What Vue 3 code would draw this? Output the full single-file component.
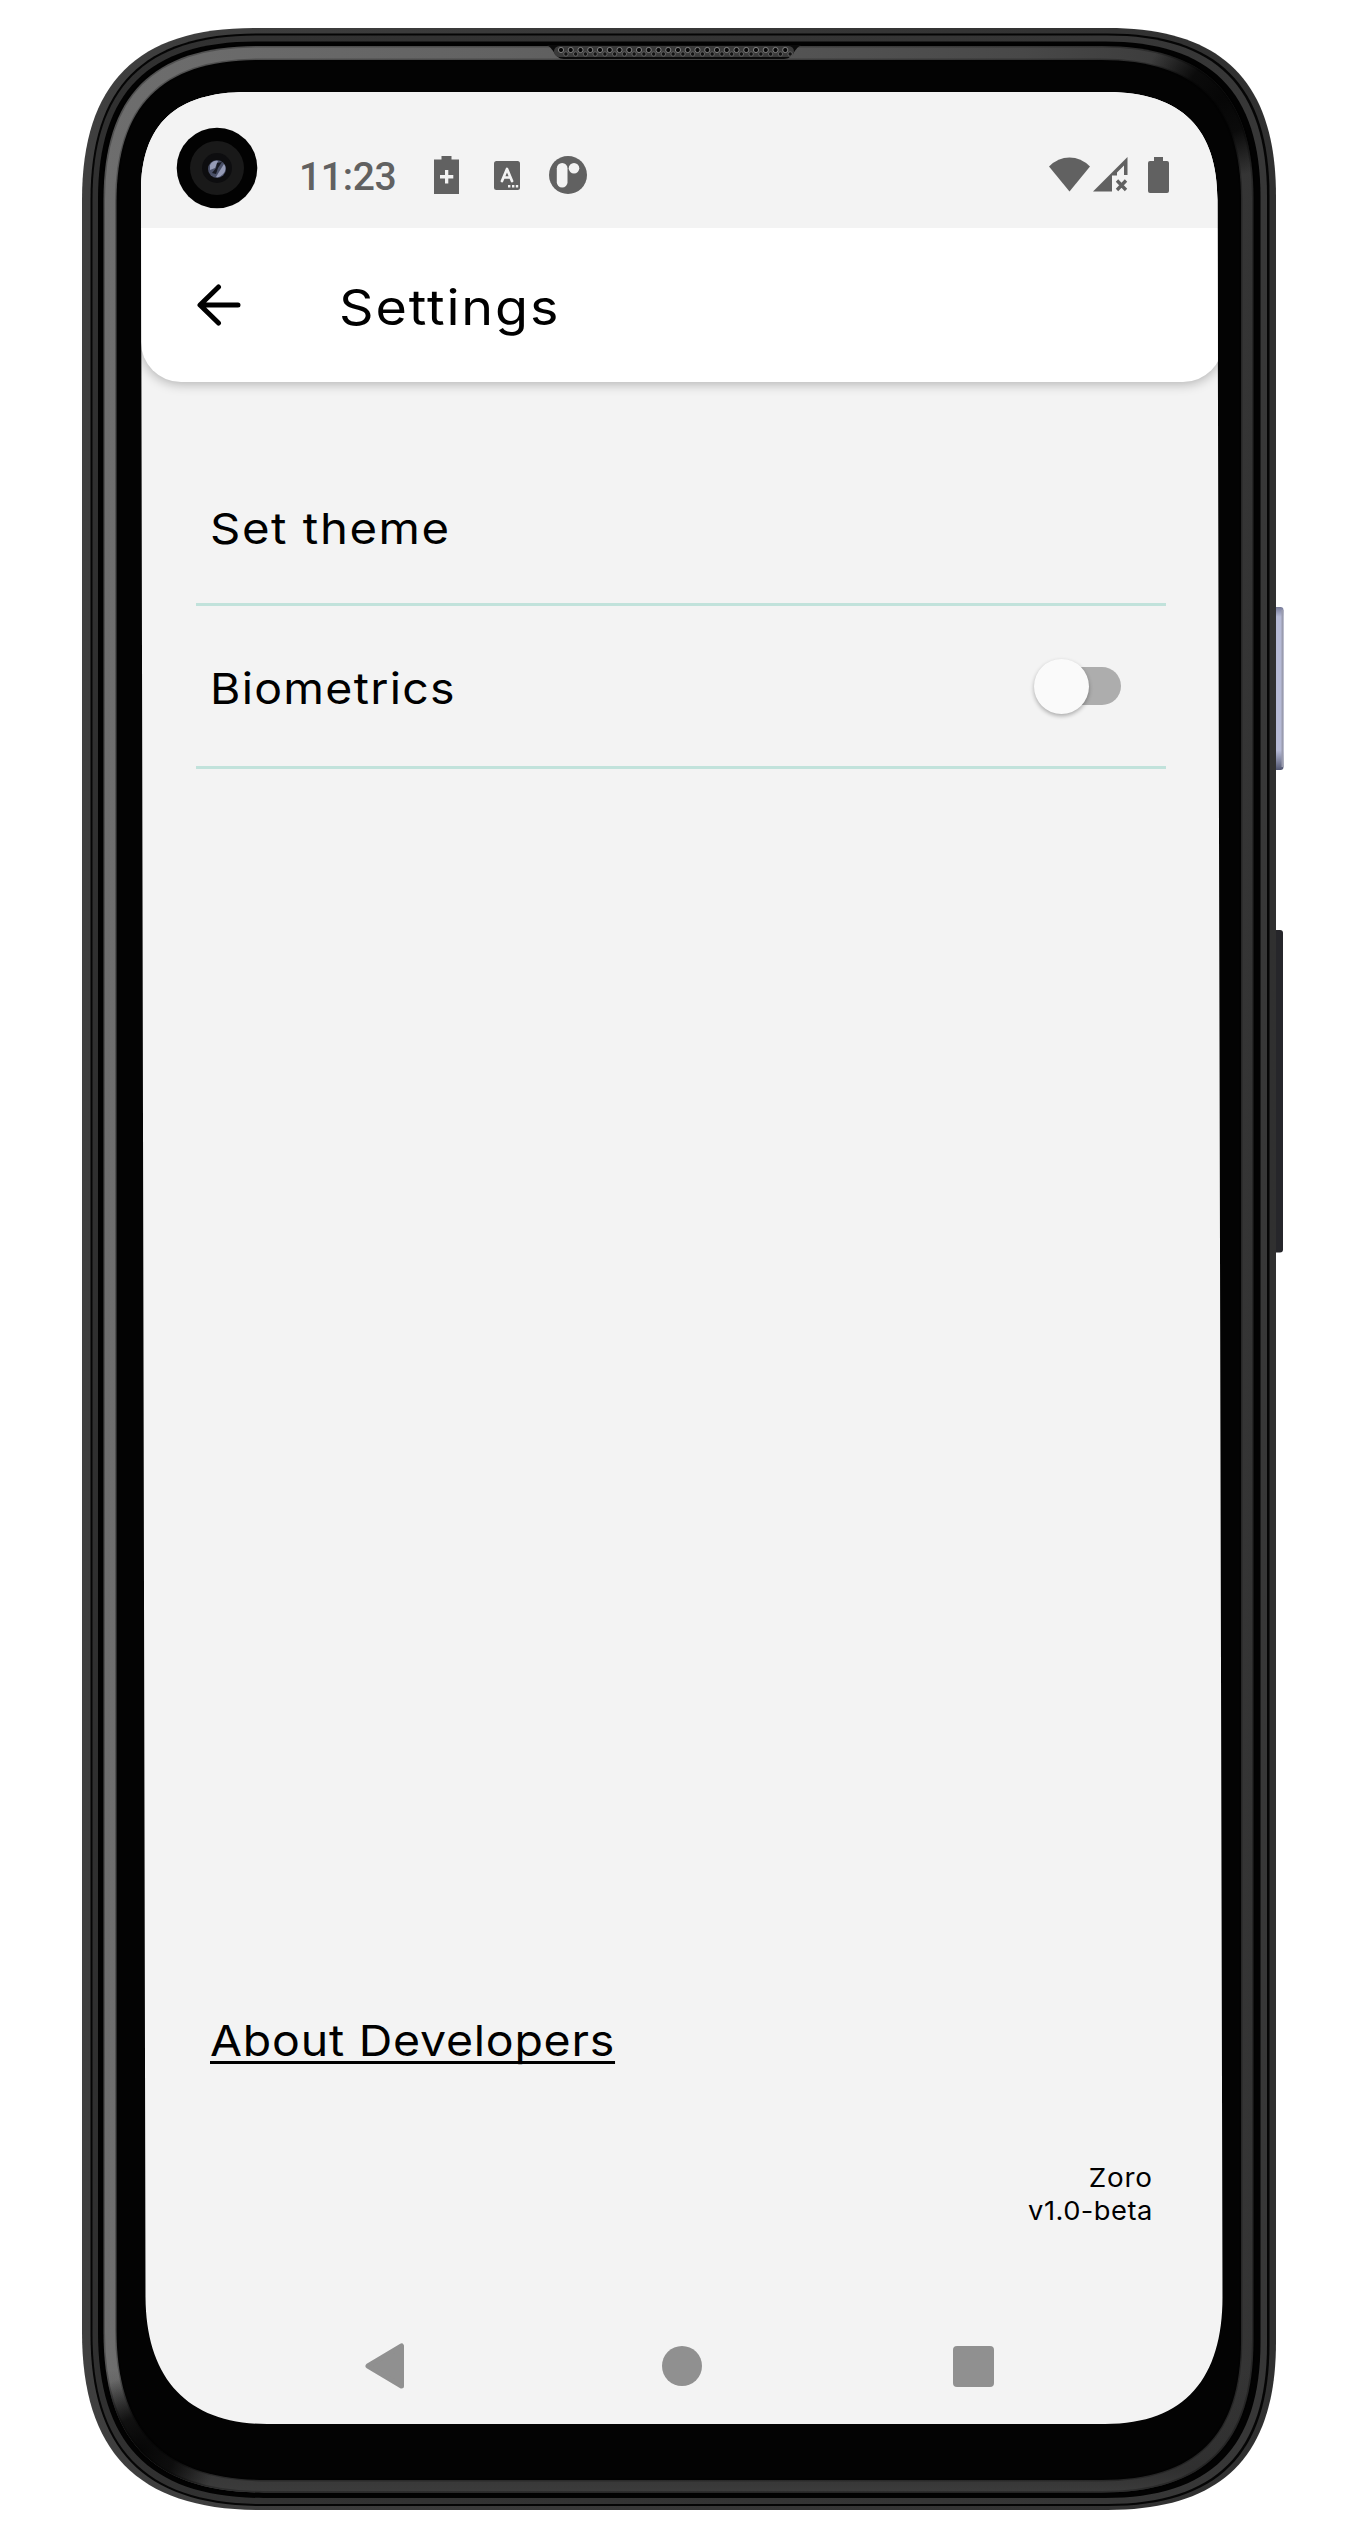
<script setup>
const K = 0.68
// Rounded outline whose corners ease in and out like a phone chassis.
function outline(x1, y1, x2, y2, tl, tr, br, bl) {
  const q = (r) => r * (1 - K)
  return [
    `M${x1} ${y1 + tl}`,
    `C${x1} ${y1 + q(tl)} ${x1 + q(tl)} ${y1} ${x1 + tl} ${y1}`,
    `L${x2 - tr} ${y1}`,
    `C${x2 - q(tr)} ${y1} ${x2} ${y1 + q(tr)} ${x2} ${y1 + tr}`,
    `L${x2} ${y2 - br}`,
    `C${x2} ${y2 - q(br)} ${x2 - q(br)} ${y2} ${x2 - br} ${y2}`,
    `L${x1 + bl} ${y2}`,
    `C${x1 + q(bl)} ${y2} ${x1} ${y2 - q(bl)} ${x1} ${y2 - bl}Z`,
  ].join('')
}

const bevel = outline(103.5, 46, 1253.5, 2492.5, 154, 152, 152, 160)
const rings = [
  { fill: 'url(#rim)', d: outline(82, 28, 1276, 2510, 172, 168, 168, 178) },
  { fill: '#050505', d: outline(90.5, 33.5, 1269.5, 2506, 166, 162, 162, 172) },
  { fill: 'url(#rim2)', d: outline(92.5, 35.5, 1267, 2504, 164, 160, 160, 170) },
  { fill: '#020202', d: outline(98, 41.5, 1260.5, 2498, 158, 156, 156, 166) },
  { fill: 'url(#bevel)', d: bevel },
  { fill: 'url(#bevelFoot)', d: bevel },
  { fill: 'url(#shadeTop)', d: bevel },
  { fill: 'url(#shadeFoot)', d: bevel },
]
const glass = outline(116.5, 60, 1241, 2480, 142, 140, 140, 150)
const holes = Array.from({ length: 24 }, (_, i) => 561 + i * 9.75)
</script>

<template>
  <main class="page">
    <svg class="device" width="1370" height="2534" viewBox="0 0 1370 2534" aria-hidden="true">
      <defs>
        <linearGradient id="rim" x1="0" x2="1" y1="0" y2="0">
          <stop offset="0" stop-color="#3f3f3f" /><stop offset="1" stop-color="#303030" />
        </linearGradient>
        <linearGradient id="rim2" x1="0" x2="1" y1="0" y2="0">
          <stop offset="0" stop-color="#303030" /><stop offset="1" stop-color="#373737" />
        </linearGradient>
        <linearGradient id="bevel" x1="0" x2="1" y1="0" y2="0">
          <stop offset="0" stop-color="#6e6e6e" /><stop offset="0.35" stop-color="#626262" /><stop offset="0.8" stop-color="#484848" /><stop offset="1" stop-color="#343434" />
        </linearGradient>
        <linearGradient id="bevelFoot" x1="0" x2="0" y1="0" y2="1">
          <stop offset="0.95" stop-color="#2e2e2e" stop-opacity="0" /><stop offset="0.99" stop-color="#2e2e2e" stop-opacity="0.85" /><stop offset="1" stop-color="#3c3c3c" />
        </linearGradient>
        <linearGradient id="power" x1="0" x2="0" y1="0" y2="1">
          <stop offset="0" stop-color="#777b98" /><stop offset="0.06" stop-color="#b6bad6" /><stop offset="0.88" stop-color="#b6bad6" /><stop offset="1" stop-color="#50556f" />
        </linearGradient>
        <radialGradient id="shadeTop" gradientUnits="userSpaceOnUse" cx="1222" cy="98" r="80">
          <stop offset="0" stop-color="#060606" /><stop offset="0.45" stop-color="#060606" stop-opacity="0.9" /><stop offset="1" stop-color="#060606" stop-opacity="0" />
        </radialGradient>
        <radialGradient id="shadeFoot" gradientUnits="userSpaceOnUse" cx="142" cy="2450" r="75">
          <stop offset="0" stop-color="#060606" /><stop offset="0.45" stop-color="#060606" stop-opacity="0.85" /><stop offset="1" stop-color="#060606" stop-opacity="0" />
        </radialGradient>
      </defs>
      <rect x="1273" y="607" width="10.5" height="163" rx="3" fill="url(#power)" />
      <rect x="1281.5" y="610" width="2" height="157" fill="#9a9cae" />
      <rect x="1273" y="930" width="10" height="322.5" rx="3" fill="#26262a" />
      <path v-for="r in rings" :key="r.fill" :d="r.d" :fill="r.fill" />
      <path :d="bevel" fill="none" stroke="#000" stroke-opacity="0.25" stroke-width="3" />
      <path :d="glass" fill="#030303" stroke="#000" stroke-opacity="0.25" stroke-width="3" />
      <path d="M546 45H802C794 47 794 59 784 59H564C554 59 554 47 546 45Z" fill="#0a0a0a" />
      <rect x="554" y="46" width="240" height="11" rx="5.5" fill="#3a3a3a" />
      <g v-for="x in holes" :key="x">
        <circle :cx="x" cy="50" r="2.6" fill="#070707" stroke="#8a8a8a" stroke-width="0.9" />
        <circle :cx="x + 4.9" cy="54" r="2.2" fill="#111" stroke="#707070" stroke-width="0.8" />
      </g>
    </svg>

    <section class="screen">
      <header class="status">
        <div class="status-left">
          <span class="clock">11:23</span>
          <svg class="charge" width="25" height="38" viewBox="0 0 25 38"><path fill="#616161" fill-rule="evenodd" d="M7.5 0h10v3.500H25V38H0V3.500h7.500zM11 14v5H6v3.600h5v5h3.300v-5h5V19h-5v-5z" /></svg>
          <svg class="lang" width="26" height="29" viewBox="0 0 26 29">
            <rect width="26" height="29" rx="2.500" fill="#616161" />
            <path d="M8 20 13 8l5 12M10 16.500h6" fill="none" stroke="#f3f3f3" stroke-width="2.700" stroke-linecap="round" stroke-linejoin="round" />
            <path d="M14 24h2.400v2.400H14zM18 24h2.400v2.400H18zM21.800 24h2.400v2.400h-2.400z" fill="#f3f3f3" />
          </svg>
          <svg class="app" width="38" height="38" viewBox="0 0 38 38">
            <circle cx="19" cy="19" r="19" fill="#616161" /><rect x="7.800" y="7" width="10.700" height="24.500" rx="5.300" fill="#f3f3f3" /><circle cx="25" cy="12.300" r="5.300" fill="#f3f3f3" />
          </svg>
        </div>
        <div class="status-right">
          <svg width="41" height="35" viewBox="0 0 41 35"><path d="M0 9.500Q9 .5 20.500.5T41 9.500L20.500 34.500Z" fill="#616161" /></svg>
          <svg class="signal" width="35" height="35" viewBox="0 0 35 35">
            <path fill="#616161" fill-rule="evenodd" d="M0 34.500 34.500 0V18H31V8.500L24 15.500V18.500H19V34.500Z" />
            <path d="M24 23.500 33 33M33 23.500 24 33" stroke="#616161" stroke-width="3.300" />
          </svg>
          <svg class="battery" width="21" height="36" viewBox="0 0 21 36"><path fill="#616161" d="M6 0h9v4h4a2 2 0 0 1 2 2v28a2 2 0 0 1-2 2H2a2 2 0 0 1-2-2V6a2 2 0 0 1 2-2h4z" /></svg>
        </div>
      </header>

      <div class="appbar">
        <svg width="44" height="42" viewBox="0 0 44 42"><path d="M21.500 3 3 21 21.500 39M3.500 21H41" fill="none" stroke="#000" stroke-width="5" stroke-linecap="round" stroke-linejoin="round" /></svg>
        <h1>Settings</h1>
      </div>

      <div class="body">
        <div class="row theme"><span class="label">Set theme</span></div>
        <div class="row bio"><span class="label">Biometrics</span><span class="switch"><i /></span></div>
      </div>

      <footer class="foot">
        <a class="about">About Developers</a>
        <div class="version"><span class="zoro">Zoro</span><span class="beta">v1.0-beta</span></div>
      </footer>

      <nav class="nav">
        <svg width="40" height="46" viewBox="0 0 40 46"><path d="M3 23 36.500 3V43Z" fill="#909090" stroke="#909090" stroke-width="5" stroke-linejoin="round" /></svg>
        <span class="home" />
        <span class="recent" />
      </nav>
    </section>

    <svg class="camera" width="82" height="82" viewBox="0 0 82 82" aria-hidden="true">
      <circle cx="41" cy="41" r="40.300" fill="#020202" /><circle cx="41" cy="41" r="27" fill="#191919" /><circle cx="41" cy="41" r="15" fill="#0d0d0f" />
      <circle cx="41" cy="42" r="9" fill="#4a5068" /><path d="M34 38q3-5 8-4l-3 7-5 2zM43 45l5-8q3 4 0 9-4 5-8 4z" fill="#959bb6" />
      <path d="M36 46l4-5 1-5 5-1-4 6-2 6z" fill="#171922" />
    </svg>
  </main>
</template>

<style>
body { background: #fff; }
</style>

<style scoped>
.page { position: relative; width: 1370px; height: 2534px; overflow: hidden; background: #fff; box-sizing: border-box; padding: 92px 0 0 141px; font-family: Inter, "Liberation Sans", sans-serif; color: #000; }
.device { position: absolute; left: 0; top: 0; }
.camera { position: absolute; left: 175.500px; top: 126.500px; }
.screen { position: relative; width: 1082px; height: 2332px; background: #f3f3f3; display: flex; flex-direction: column;
  clip-path: path("M0 100C0 32 35 0 106 0H966C1042 0 1076.500 38 1076.500 108L1081.500 2205C1081.500 2285 1045 2332 964 2332H126C45 2332 5 2285 4.500 2205Z"); }
.status { position: relative; z-index: 1; background: #f3f3f3; height: 136px; flex: none; display: flex; justify-content: space-between; }
.status-left, .status-right { display: flex; align-items: flex-start; padding-top: 64px; }
.status-left { padding-left: 158px; }
.status-right { padding-right: 54px; padding-top: 65px; }
.clock { width: 97px; white-space: nowrap; font: 500 39px/42px Roboto, sans-serif; letter-spacing: -.3px; color: #616161; }
.charge { margin-left: 38px; }
.lang { margin: 5px 0 0 35px; }
.app { margin-left: 29px; }
.signal { margin-left: 3px; }
.battery { margin-left: 20px; }
.appbar { flex: none; height: 154px; box-sizing: border-box; background: #fff; border-radius: 0 0 40px 40px; box-shadow: 0 2px 12px rgba(0,0,0,.28); display: flex; padding: 56px 0 0 56px; }
h1, .label, .about { transform-origin: 0 50%; }
h1 { font-weight: 380; font-size: 49px; line-height: 58px; letter-spacing: 1.700px; margin: -5px 0 0 98px; transform: scaleX(1.1); }
.body { padding: 0 57px 0 55px; flex: 1; }
.row { border-bottom: 3px solid #c1e2db; display: flex; justify-content: space-between; font-size: 43px; font-weight: 370; line-height: 50px; box-sizing: border-box; padding-left: 14px; }
.theme { height: 224px; padding-top: 121px; letter-spacing: 1.400px; }
.theme .label { transform: scaleX(1.1); }
.bio { height: 163px; padding-top: 57px; letter-spacing: 1.200px; }
.bio .label { transform: scaleX(1.08); }
.switch { position: relative; width: 88px; height: 38px; margin: 4px 45px 0 0; border-radius: 19px; background: linear-gradient(90deg, transparent 30px, #adadad 30px); }
.switch i { position: absolute; left: .7px; top: -8.500px; width: 55px; height: 55px; border-radius: 50%; background: #fafafa; box-shadow: 0 2px 4px rgba(0,0,0,.3); }
.foot { box-sizing: border-box; height: 320px; padding: 27px 71px 0 69px; display: flex; flex-direction: column; align-items: flex-start; }
.about { font-size: 43px; font-weight: 370; line-height: 50px; letter-spacing: .720px; text-decoration: underline; text-decoration-skip-ink: none; text-decoration-thickness: 2.500px; text-underline-offset: 5px; transform: scaleX(1.08); }
.version { align-self: flex-end; display: flex; flex-direction: column; align-items: flex-end; font-size: 26px; line-height: 33px; margin-top: 96px; }
.zoro { letter-spacing: .700px; margin-right: -.7px; transform: scaleX(1.07); transform-origin: 100% 50%; }
.beta { letter-spacing: .460px; margin-right: -.46px; transform: scaleX(1.05); transform-origin: 100% 50%; }
.nav { display: flex; align-items: center; height: 116px; padding-left: 224px; flex: none; }
.home { width: 40px; height: 40px; border-radius: 50%; background: #909090; margin-left: 257px; }
.recent { width: 41px; height: 41px; border-radius: 4px; background: #909090; margin-left: 251px; }
</style>
